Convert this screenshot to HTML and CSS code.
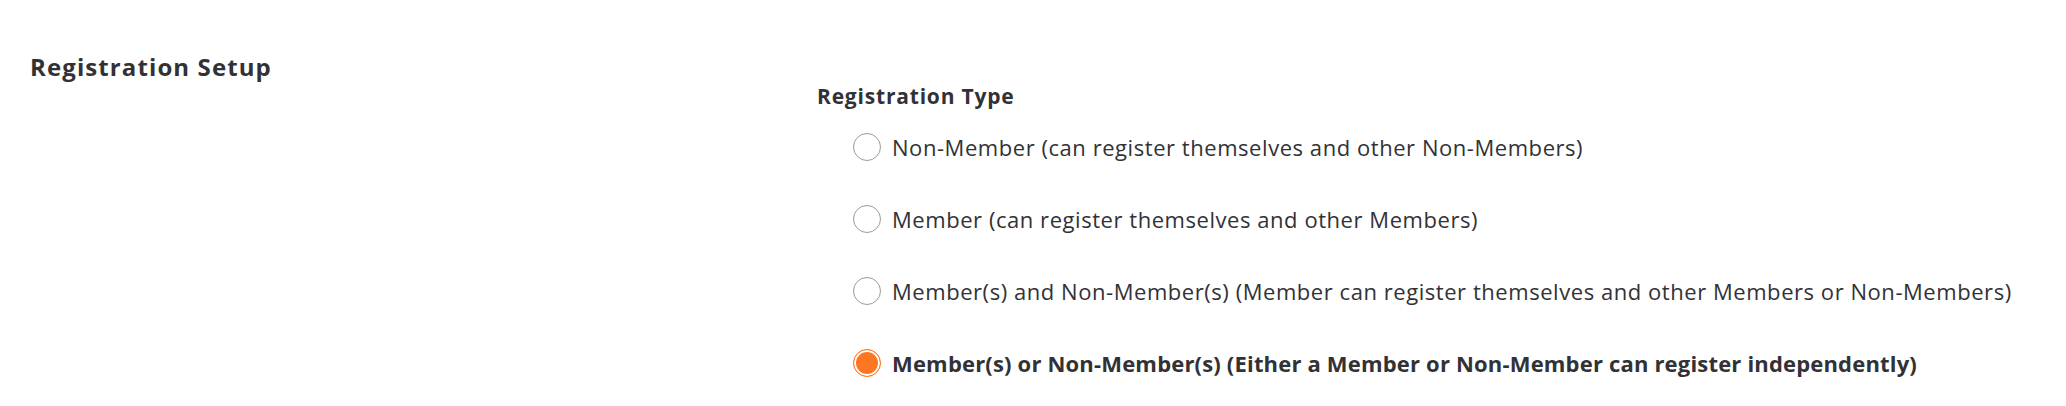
FILE: index.html
```html
<!DOCTYPE html>
<html lang="en">
<head>
    <meta charset="UTF-8">
    <meta name="viewport" content="width=device-width, initial-scale=1.0">
    <title>Registration Setup</title>
    <link rel="stylesheet" href="styles.css">
</head>
<body>
    <div class="section">
        <h2 class="section-title">Registration Setup</h2>

        <div class="section-body">
            <div class="field-label">Registration Type</div>
            <div class="radio-list">
                <label class="radio-option">
                    <input type="radio" name="regType" value="non-member">
                    <span>Non-Member (can register themselves and other Non-Members)</span>
                </label>
                <label class="radio-option">
                    <input type="radio" name="regType" value="member">
                    <span>Member (can register themselves and other Members)</span>
                </label>
                <label class="radio-option">
                    <input type="radio" name="regType" value="member-and-non-member">
                    <span>Member(s) and Non-Member(s) (Member can register themselves and other Members or Non-Members)</span>
                </label>
                <label class="radio-option">
                    <input type="radio" name="regType" value="member-or-non-member" checked>
                    <span>Member(s) or Non-Member(s) (Either a Member or Non-Member can register independently)</span>
                </label>
            </div>
        </div>
    </div>
</body>
</html>
```

FILE: styles.css
```css
body, html {
    margin: 0;
    padding: 0;
    background: #fff;
    font-family: "Open Sans", Lato, Arial, sans-serif;
    color: #323236;
}

.section {
    display: grid;
    grid-template-columns: 787px 1fr;
    padding-left: 30px;
}

.section-title {
    margin: 0;
    padding-top: 53px;
    font-size: 24px;
    line-height: 28px;
    font-weight: 700;
    letter-spacing: 1.1px;
}

.section-body {
    padding-top: 84px;
}

.field-label {
    font-size: 21px;
    line-height: 24px;
    font-weight: 700;
    letter-spacing: 0.8px;
    margin-bottom: 3px;
}

.radio-list {
    display: flex;
    flex-direction: column;
    padding-left: 36px;
}

.radio-option {
    display: flex;
    align-items: center;
    height: 72px;
    font-size: 22px;
    letter-spacing: 0.55px;
    cursor: pointer;
}

    .radio-option input {
        appearance: none;
        -webkit-appearance: none;
        flex: 0 0 auto;
        width: 28px;
        height: 28px;
        margin: 0 11px 0 0;
        border: 1px solid #9a9a9a;
        border-radius: 50%;
        background: #fff;
        cursor: pointer;
    }

        .radio-option input:checked {
            border: 1.5px solid #fd7722;
            background: #fd7722;
            box-shadow: inset 0 0 0 2px #fff;
        }

        .radio-option input:checked + span {
            font-weight: 700;
            letter-spacing: 0.18px;
        }
```
